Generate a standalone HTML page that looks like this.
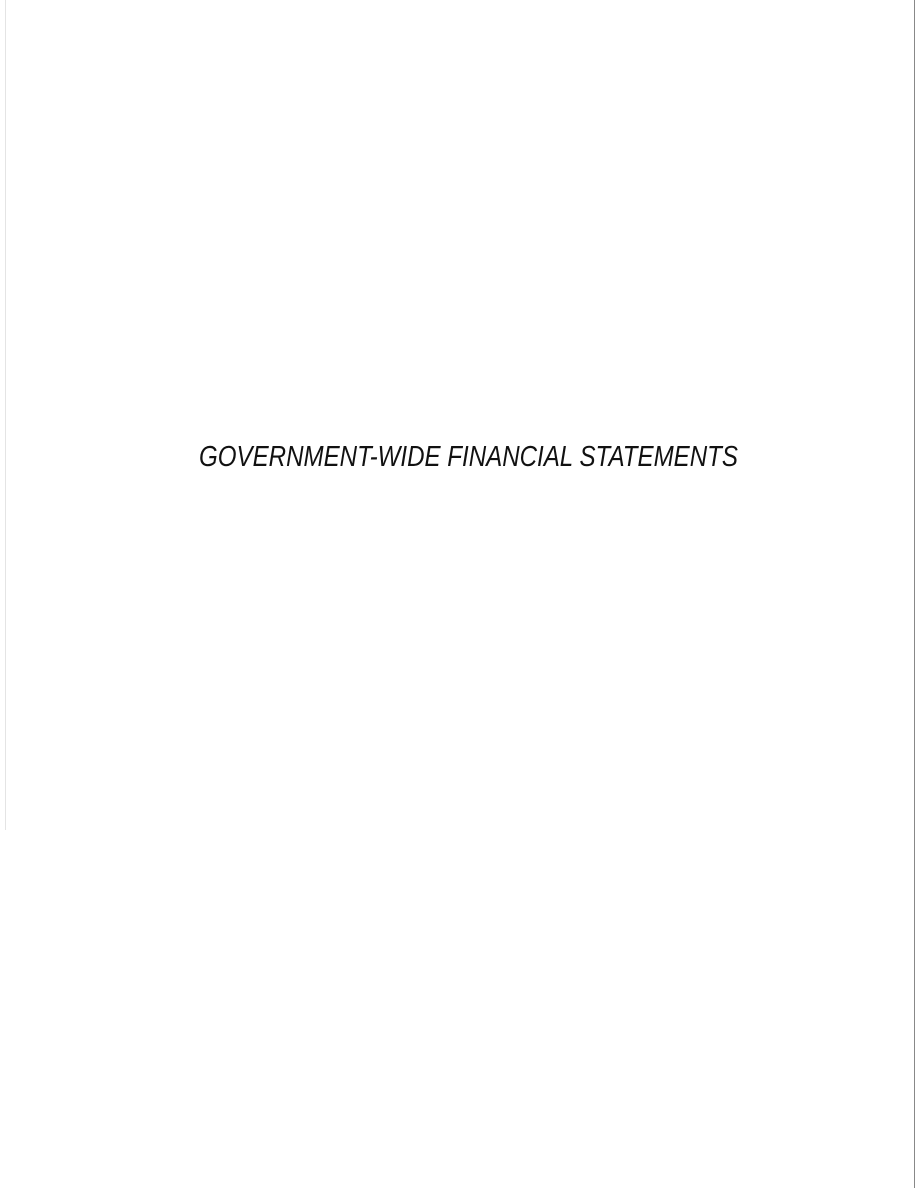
<!DOCTYPE html>
<html><head><style>
html,body{margin:0;padding:0;background:#fff;width:918px;height:1188px;overflow:hidden;position:relative}
.t{position:absolute;left:199px;top:441px;font-family:"Liberation Sans",sans-serif;font-style:italic;font-size:29px;color:#111;white-space:nowrap;transform-origin:0 0;letter-spacing:0px}
.r{position:absolute;left:914px;top:0;width:1px;height:1188px;background:#888}
.l{position:absolute;left:5px;top:0;width:1px;height:830px;background:#e4e4e4}
</style></head><body>
<div class="l"></div>
<div class="r"></div>
<div class="t" id="t">GOVERNMENT-WIDE FINANCIAL STATEMENTS</div>
<script>
var e=document.getElementById('t');var w=e.getBoundingClientRect().width;e.style.transform='scaleX('+(539/w)+')';
</script>
</body></html>
